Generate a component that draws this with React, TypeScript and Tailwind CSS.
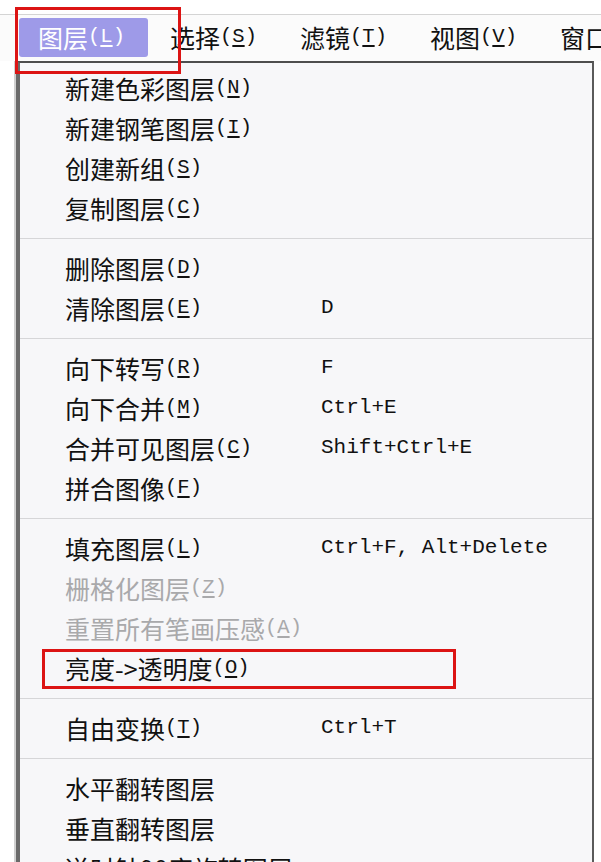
import React from 'react'

type Item =
  | { type: 'sep' }
  | { type: 'item'; label: string; key?: string; shortcut?: string; disabled?: boolean; boxed?: boolean }

const menuBar = [
  { label: '图层', key: 'L', active: true },
  { label: '选择', key: 'S' },
  { label: '滤镜', key: 'T' },
  { label: '视图', key: 'V' },
  { label: '窗口', key: 'W' },
]

const items: Item[] = [
  { type: 'item', label: '新建色彩图层', key: 'N' },
  { type: 'item', label: '新建钢笔图层', key: 'I' },
  { type: 'item', label: '创建新组', key: 'S' },
  { type: 'item', label: '复制图层', key: 'C' },
  { type: 'sep' },
  { type: 'item', label: '删除图层', key: 'D' },
  { type: 'item', label: '清除图层', key: 'E', shortcut: 'D' },
  { type: 'sep' },
  { type: 'item', label: '向下转写', key: 'R', shortcut: 'F' },
  { type: 'item', label: '向下合并', key: 'M', shortcut: 'Ctrl+E' },
  { type: 'item', label: '合并可见图层', key: 'C', shortcut: 'Shift+Ctrl+E' },
  { type: 'item', label: '拼合图像', key: 'F' },
  { type: 'sep' },
  { type: 'item', label: '填充图层', key: 'L', shortcut: 'Ctrl+F, Alt+Delete' },
  { type: 'item', label: '栅格化图层', key: 'Z', disabled: true },
  { type: 'item', label: '重置所有笔画压感', key: 'A', disabled: true },
  { type: 'item', label: '亮度->透明度', key: 'O', boxed: true },
  { type: 'sep' },
  { type: 'item', label: '自由变换', key: 'T', shortcut: 'Ctrl+T' },
  { type: 'sep' },
  { type: 'item', label: '水平翻转图层' },
  { type: 'item', label: '垂直翻转图层' },
  { type: 'item', label: '逆时针90度旋转图层' },
]

const cjk = "font-['Noto_Sans_CJK_SC',sans-serif]"
const mono = "font-['Liberation_Mono',monospace]"

function Mnemonic({ k }: { k: string }) {
  return (
    <span className={`${mono} text-[20.5px]`}>
      (<span className="underline underline-offset-[3px]">{k}</span>)
    </span>
  )
}

export default function App() {
  return (
    <div className="relative w-[601px] h-[862px] overflow-hidden bg-white">
      <div className="mt-[14px] border-t border-[#d4d4d4]" />

      {/* menu bar */}
      <div className="flex h-[46px] items-start pt-[3px] bg-[#fbfbfb] overflow-hidden">
        {menuBar.map((m, i) => (
          <div
            key={m.label}
            className={
              m.active
                ? 'ml-[19px] mr-[22px] w-[129px] h-[39px] pl-[19px] flex items-center shrink-0 rounded-[3px] bg-[#9e9ae8] text-white'
                : 'w-[130px] h-[39px] flex items-center text-[#111] shrink-0'
            }
          >
            <span className={`${cjk} text-[25px] leading-none whitespace-nowrap`}>{m.label}</span>
            {i < 4 && <Mnemonic k={m.key} />}
          </div>
        ))}
      </div>

      {/* dropdown */}
      <div className="flex">
        <div className="ml-[14px] w-[2px] bg-[#d0d0d0]" />
        <div className="w-[578px] border-l-[4px] border-l-[#6a6a6a] border-t-2 border-t-[#4e4e4e] border-r-2 border-r-[#5a5a5a] bg-[#f7f7f9] pt-[5px] text-[#111]">
          {items.map((it, i) =>
            it.type === 'sep' ? (
              <div key={i} className="h-[20px] flex items-center">
                <div className="w-full border-t border-[#d6d6d8]" />
              </div>
            ) : (
              <div
                key={i}
                className={`relative h-[40px] flex items-center pl-[45px] ${it.disabled ? 'text-[#a9a9ab]' : 'text-[#111]'}`}
              >
                <div className="w-[256px] flex items-center whitespace-nowrap">
                  <span className={`${cjk} text-[25px] leading-none`}>{it.label}</span>
                  {it.key && <Mnemonic k={it.key} />}
                </div>
                {it.shortcut && (
                  <span className={`${mono} text-[21px] whitespace-nowrap`}>{it.shortcut}</span>
                )}
                {it.boxed && (
                  <div className="absolute left-[22px] top-[1px] w-[414px] h-[40px] border-[3px] border-[#dc1414]" />
                )}
              </div>
            )
          )}
        </div>
      </div>

      {/* annotation around active menu */}
      <div className="absolute left-[15px] top-[7px] w-[166px] h-[67px] border-[3px] border-[#dc1414]" />
    </div>
  )
}
